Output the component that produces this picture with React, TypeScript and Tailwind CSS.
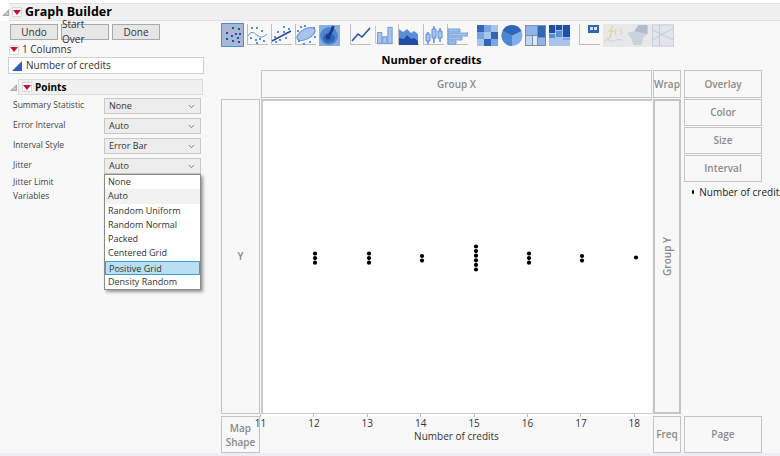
import React from 'react';
import { ChevronDown } from 'lucide-react';

const FONT = '[font-family:"Open_Sans","Noto_Sans",sans-serif]';

const OPTIONS = [
  { label: 'Summary Statistic', value: 'None' },
  { label: 'Error Interval', value: 'Auto' },
  { label: 'Interval Style', value: 'Error Bar' },
  { label: 'Jitter', value: 'Auto' },
];

const JITTER = ['None', 'Auto', 'Random Uniform', 'Random Normal', 'Packed', 'Centered Grid', 'Positive Grid', 'Density Random'];

const TICKS = [11, 12, 13, 14, 15, 16, 17, 18];
// x in plot coordinates, count of stacked dots
const POINTS = [
  { x: 52, n: 3 },
  { x: 106, n: 3 },
  { x: 159, n: 2 },
  { x: 213, n: 6 },
  { x: 266, n: 3 },
  { x: 319, n: 2 },
  { x: 373, n: 1 },
];

const B1 = '#1f4ea8';
const B2 = '#5b8fd9';
const B3 = '#a9c4ea';

function RedMenu() {
  return (
    <span className="flex h-[10px] w-[10px] shrink-0 items-center justify-center rounded-[1px] border border-[#d8d8d8] bg-white">
      <svg width="8" height="5" viewBox="0 0 8 5"><path d="M0 0h8L4 5z" fill="#c8102e" /></svg>
    </span>
  );
}

function Disclosure() {
  return (
    <svg width="7" height="7" viewBox="0 0 7 7" className="shrink-0"><path d="M7 0v7H0z" fill="#a8a8a8" /><path d="M5.5 3v2.5H3z" fill="#e8e8e8" /></svg>
  );
}

function Btn({ children }: { children: React.ReactNode }) {
  return (
    <div className="flex h-[16px] w-[48px] items-center justify-center border border-[#a9a9a9] bg-[#e6e6e6] text-[10px] text-[#333]">{children}</div>
  );
}

function Dots({ pts, color = B2 }: { pts: number[][]; color?: string }) {
  return <>{pts.map(([x, y], i) => <rect key={i} x={x} y={y} width="2" height="2" fill={color} />)}</>;
}

function Axes() {
  return <path d="M.5 0v20.5H21" fill="none" stroke="#bdbdbd" />;
}

function ToolIcon({ w = 21, className = '', children }: { w?: number; className?: string; children: React.ReactNode }) {
  return <svg width={w} height="23" viewBox="0 0 21 23" className={`shrink-0 ${className}`}>{children}</svg>;
}

function Toolbar() {
  return (
    <div className="flex h-[24px] items-center">
      <div className="flex h-[24px] w-[23px] items-center justify-center border border-[#4a90d9] bg-[#a9b7d3]">
        <svg width="20" height="20" viewBox="0 0 20 20">
          <Dots color={B1} pts={[[9, 2], [15, 3], [3, 7], [12, 8], [16, 8], [8, 10], [3, 13], [14, 12], [9, 15], [15, 16]]} />
        </svg>
      </div>
      <ToolIcon className="ml-[3px]">
        <Axes />
        <Dots pts={[[4, 3], [9, 3], [14, 6], [3, 13], [8, 15], [12, 14], [16, 16], [9, 18]]} />
        <path d="M1 12c4-7 7-2 10 0s6 1 9-2" fill="none" stroke={B2} />
      </ToolIcon>
      <ToolIcon className="ml-[3px]">
        <Axes />
        <Dots pts={[[12, 2], [17, 4], [6, 7], [12, 7], [3, 12], [14, 13], [8, 15], [4, 17]]} />
        <path d="M1 17L20 7" stroke={B1} strokeWidth="1.5" />
      </ToolIcon>
      <ToolIcon className="ml-[3px]">
        <Axes />
        <Dots pts={[[5, 2], [9, 1], [2, 6], [18, 3], [3, 16], [14, 17], [19, 12], [8, 19]]} />
        <ellipse cx="11" cy="10" rx="10" ry="5" transform="rotate(-28 11 10)" fill={B3} stroke={B2} />
      </ToolIcon>
      <ToolIcon className="ml-[3px]">
        <rect x="0" y="1" width="21" height="21" fill="#8aaedf" />
        <ellipse cx="10" cy="12" rx="9" ry="9" fill="#4f86d2" />
        <ellipse cx="10" cy="14" rx="6" ry="5" fill="#2f66b8" />
        <path d="M14 2c0 5-3 6-4 10" stroke="#173e86" strokeWidth="3" fill="none" />
        <circle cx="9" cy="13" r="2.5" fill="#173e86" />
      </ToolIcon>
      <ToolIcon className="ml-[10px]">
        <Axes />
        <path d="M2 17l6-7 4 3 8-9" fill="none" stroke={B1} strokeWidth="1.5" />
      </ToolIcon>
      <ToolIcon w={18} className="ml-[4px]">
        <Axes />
        <path d="M3 8h5v13H3zM9 13h5v8H9zM15 2h5v19h-5z" fill={B3} stroke={B2} />
      </ToolIcon>
      <ToolIcon className="ml-[5px]">
        <Axes />
        <path d="M1 5l4 3 4-3 4 4 3-2 4 3v11H1z" fill={B2} />
        <path d="M1 14l5 1 3-4 4 4 3-1 4 3v4H1z" fill={B1} />
      </ToolIcon>
      <ToolIcon className="ml-[4px]">
        <Axes />
        <path d="M5 8v12M11 2v17M17 4v14" stroke={B1} />
        <path d="M3 10h4v7H3zM9 5h4v9H9zM15 7h4v7h-4z" fill={B3} stroke={B2} />
      </ToolIcon>
      <ToolIcon className="ml-[3px]">
        <Axes />
        <path d="M1 5h12v3H1zM1 9h20v3H1zM1 13h14v3H1zM1 17h8v3H1z" fill={B3} stroke={B2} strokeWidth=".8" />
      </ToolIcon>
      <ToolIcon className="ml-[9px]">
        <rect y="1" width="21" height="21" fill="#d6e2f4" />
        <path d="M0 1h7v7H0zM14 8h7v7h-7zM7 15h7v7H7z" fill="#2f66b8" />
        <path d="M7 1h7v7H7zM0 8h7v7H0zM14 15h7v7h-7z" fill="#7aa5e3" />
        <path d="M14 1h7v7h-7zM7 8h7v7H7zM0 15h7v7H0z" fill="#a9c4ea" />
      </ToolIcon>
      <ToolIcon w={22} className="ml-[3px]">
        <circle cx="10.5" cy="11.5" r="10.5" fill="#7eb0ee" />
        <path d="M10.5 11.5V1A10.500 10.500 0 0 1 20 7z" fill="#2f66b8" />
        <path d="M10.500 11.500L1 7a10.500 10.500 0 0 1 9.500-6z" fill="#2f66b8" />
        <path d="M10.500 11.500V22A10.500 10.500 0 0 1 1 7z" fill="#4f86d2" />
      </ToolIcon>
      <ToolIcon className="ml-[2px]">
        <rect y="1" width="21" height="21" fill="#7c8ea8" />
        <path d="M1 2h11v9H1zM13 14h7v7h-7z" fill="#8fb4e8" />
        <path d="M13 2h7v11h-7z" fill="#2f66b8" />
        <path d="M1 12h6v9H1z" fill="#c4d6ef" />
        <path d="M8 12h4v9H8z" fill="#e0e8f4" />
      </ToolIcon>
      <ToolIcon className="ml-[3px]">
        <rect y="1" width="21" height="21" fill="#a9c4ea" />
        <path d="M0 1h6v8H0zM7 1h6v5H7zM14 1h7v12h-7z" fill="#1f4ea8" />
        <path d="M7 7h6v6H7zM0 10h6v4H0z" fill="#5b8fd9" />
        <path d="M14 14h7v2h-7z" fill="#7aa5e3" />
      </ToolIcon>
      <ToolIcon className="ml-[9px]">
        <Axes />
        <rect x="9" y="1" width="11" height="8" fill="#2f66b8" />
        <path d="M11 3h3v3h-3zM15 3h3v3h-3z" fill="#d6e2f4" />
      </ToolIcon>
      <div className="ml-[3px] flex h-[23px] w-[71px] bg-[#e8e8e8]">
        <ToolIcon w={22}>
          <path d="M10 2C7 2 8 8 7 12S4 14 4 14M5 7h6" fill="none" stroke="#e2c88a" />
          <text x="11" y="10" fontSize="8" fill="#e2c88a" fontFamily="Liberation Serif">(·)</text>
          <path d="M1 17c4-4 7 2 10 0s6-2 9 0" fill="none" stroke="#c6d4e8" />
        </ToolIcon>
        <ToolIcon w={22} className="ml-[2px]">
          <path d="M0 9l7-2 4-6h9v9l-4 3-2 8H6l-2-6z" fill="#c9d2de" />
          <path d="M7 7l4-6h9v9z" fill="#aebccd" />
        </ToolIcon>
        <ToolIcon w={22} className="ml-[3px]">
          <rect y="1" width="21" height="21" fill="#e2e6ec" stroke="#c6d0de" />
          <path d="M0 6l21 10M0 16L21 4M7 1v21" stroke="#bccbe0" />
        </ToolIcon>
      </div>
    </div>
  );
}

function Zone({ className = '', children }: { className?: string; children?: React.ReactNode }) {
  return (
    <div className={`flex items-center justify-center border-2 border-[#c4c4c4] bg-[#f8f8f8] text-center text-[10px] leading-[13px] font-semibold text-[#8a8a8a] ${className}`}>
      {children}
    </div>
  );
}

function Plot() {
  return (
    <svg width="389" height="315" viewBox="0 0 389 315" className="block">
      <rect width="389" height="315" fill="#fff" />
      {POINTS.map((p) =>
        Array.from({ length: p.n }).map((_, i) => {
          // stack is centred on the axis row, sitting on the same 4.6px pitch
          const top = p.n === 6 ? 146 : p.n === 3 ? 153 : p.n === 2 ? 155.500 : 157;
          return <circle key={`${p.x}-${i}`} cx={p.x} cy={top + i * 4.6 - 0.5} r="2.100" fill="#000" />;
        })
      )}
    </svg>
  );
}

export default function App() {
  return (
    <div className={`h-[456px] w-[780px] overflow-hidden bg-white ${FONT}`}>
      <div className="h-[3px] bg-white" />
      <div className="flex h-[18px] items-center">
        <div className="flex h-full w-[9px] items-center pl-[2px]"><Disclosure /></div>
        <div className="flex h-full flex-1 items-center gap-[3px] border-y border-[#e0e0e0] bg-[#f0f0f0] pl-[3px]">
          <RedMenu />
          <span className="text-[12.500px] leading-none font-bold text-black">Graph Builder</span>
        </div>
      </div>

      <div className="flex h-[432px] bg-[#f8f8f8]">
        {/* left panel */}
        <div className="w-[221px] shrink-0 pt-[3px]">
          <div className="flex gap-[3px] pl-[10px]">
            <Btn>Undo</Btn>
            <Btn>Start Over</Btn>
            <Btn>Done</Btn>
          </div>
          <div className="mt-[2px] flex h-[15px] items-center gap-[3px] pl-[9px] text-[10px] text-[#333]">
            <RedMenu />
            1 Columns
          </div>
          <div className="ml-[8px] flex h-[17px] w-[196px] items-center gap-[4px] border border-[#d0d0d0] bg-white pl-[3px] text-[10px] text-[#333]">
            <svg width="10" height="10" viewBox="0 0 10 10"><path d="M10 0v10H0z" fill="#2f5fc0" /></svg>
            Number of credits
          </div>
          <div className="mt-[5px] flex items-center pl-[10px]">
            <Disclosure />
            <div className="ml-[1px] flex h-[16px] w-[185px] items-center gap-[3px] border border-[#dcdcdc] bg-[#f0f0f0] pl-[3px]">
              <RedMenu />
              <span className="text-[10px] font-bold text-black">Points</span>
            </div>
          </div>
          <div className="mt-[3px] flex flex-col gap-[4px]">
            {OPTIONS.map((o) => (
              <div key={o.label} className="flex h-[16px] items-start pl-[13px]">
                <span className="w-[91px] text-[8.500px] leading-[13px] text-[#444]">{o.label}</span>
                <div className="relative w-[97px]">
                  <div className="flex h-[16px] items-center justify-between border border-[#c8c8c8] bg-[#ededed] pr-[4px] pl-[4px] text-[9px] text-[#333]">
                    {o.value}
                    <ChevronDown size={9} strokeWidth={2} className="text-[#555]" />
                  </div>
                  {o.label === 'Jitter' && (
                    <div className="absolute top-[16px] left-0 z-10 w-[97px] border border-[#8a8a8a] bg-white shadow-[2px_2px_3px_rgba(0,0,0,0.4)]">
                      {JITTER.map((j) => (
                        <div
                          key={j}
                          className={`h-[14.300px] pl-[3px] text-[9px] leading-[14px] text-[#333] ${
                            j === 'Auto' ? 'bg-[#f2f2f2]' : j === 'Positive Grid' ? 'border border-[#3fa0d0] bg-[#b8dff2] pl-[2px] leading-[12px]' : ''
                          }`}
                        >
                          {j}
                        </div>
                      ))}
                    </div>
                  )}
                </div>
              </div>
            ))}
          </div>
          <div className="mt-[1px] pl-[13px] text-[8.500px] leading-[14px] text-[#444]">
            <div>Jitter Limit</div>
            <div>Variables</div>
          </div>
        </div>

        {/* right panel */}
        <div className="flex-1">
          <div className="pt-[2px]"><Toolbar /></div>
          <div className="h-[23px] pr-[139px] text-center text-[11px] leading-[26px] font-bold text-black">Number of credits</div>
          <div className="grid grid-cols-[39px_391px_28px_80px] grid-rows-[28px_316px_39px] gap-x-[1px]">
            <div />
            <Zone className="!border !border-[#c4c4c4]">Group X</Zone>
            <Zone className="!border !border-[#c4c4c4]">Wrap</Zone>
            <Zone className="ml-[2px] !border !border-[#c4c4c4]">Overlay</Zone>

            <Zone className="mt-[1px] !border">Y</Zone>
            <div className="mt-[1px] border-t-2 border-l-2 border-[#c9c9c9] bg-white"><Plot /></div>
            <Zone className="relative mt-[1px] !border-x-2"><span className="-rotate-90 whitespace-nowrap">Group Y</span></Zone>
            <div className="ml-[2px] flex flex-col pt-[1px]">
              <Zone className="h-[27px] !border">Color</Zone>
              <Zone className="mt-[1px] h-[27px] !border">Size</Zone>
              <Zone className="mt-[1px] h-[27px] !border">Interval</Zone>
              <div className="mt-[2px] flex h-[16px] w-[100px] items-center gap-[5px] pl-[8px] text-[10px] whitespace-nowrap text-[#222]">
                <span className="h-[4px] w-[4px] rounded-full bg-black" />
                Number of credits
              </div>
            </div>

            <Zone className="mt-[2px] !border leading-[14px]">Map<br />Shape</Zone>
            <div className="relative mt-[-1px] border-t border-[#c9c9c9]">
              {TICKS.map((t, i) => (
                <div key={t} className="absolute top-0 flex w-[20px] flex-col items-center" style={{ left: i * 53.400 - 10.500 }}>
                  <span className="h-[3px] w-px bg-[#bbb]" />
                  <span className="text-[10px] leading-[13px] text-[#333]">{t}</span>
                </div>
              ))}
              <div className="pt-[16px] text-center text-[10px] leading-[13px] text-[#333]">Number of credits</div>
            </div>
            <Zone className="mt-[2px] !border">Freq</Zone>
            <Zone className="mt-[2px] ml-[2px] !border">Page</Zone>
          </div>
          <div className="mt-[1px] h-[3px] w-[560px]" />
        </div>
      </div>
      <div className="h-[3px] bg-[#eeeef8]" />
    </div>
  );
}
